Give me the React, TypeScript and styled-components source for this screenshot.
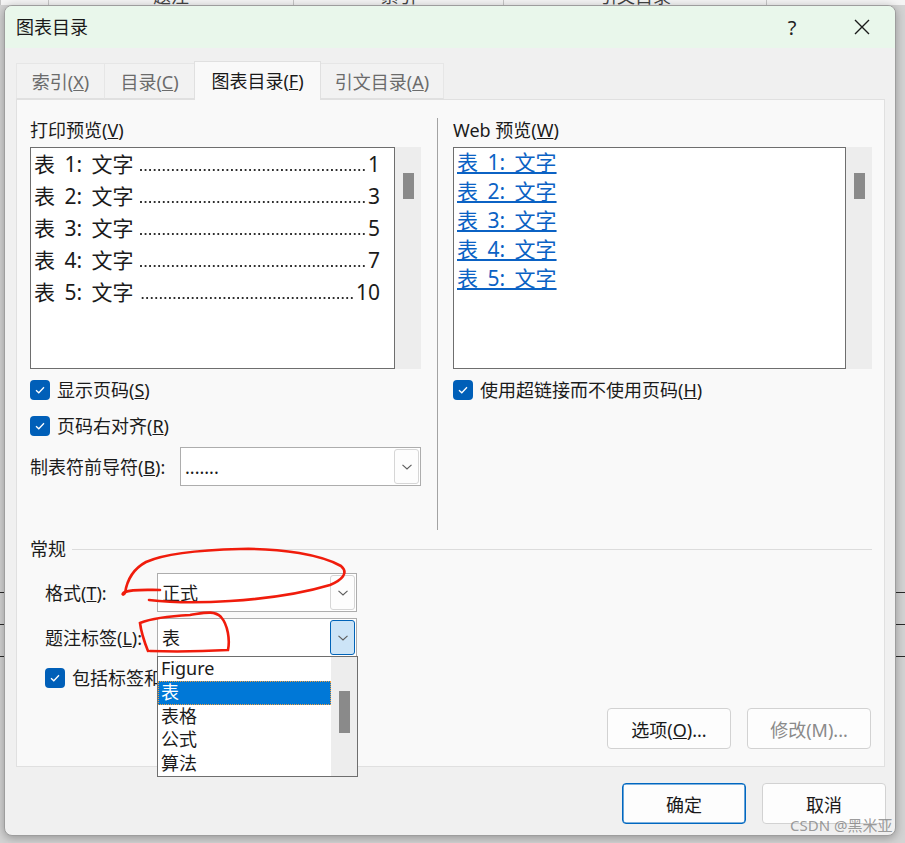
import React from 'react';
import styled, { createGlobalStyle } from 'styled-components';

const GlobalStyle = createGlobalStyle`
  html, body {
    margin: 0;
    padding: 0;
  }
  body {
    background: #cfcfcf;
    font-family: "Noto Sans", "Noto Sans CJK SC", sans-serif;
    color: #1b1b1b;
  }
  * {
    box-sizing: border-box;
  }
`;

const printRows = [
  { n: 1, page: '1' },
  { n: 2, page: '3' },
  { n: 3, page: '5' },
  { n: 4, page: '7' },
  { n: 5, page: '10' },
];

const captionOptions = ['Figure', '表', '表格', '公式', '算法'];

const Page = styled.div`
  position: relative;
  width: 905px;
  height: 843px;
  overflow: hidden;
`;

/* the Word document lying behind the dialog */
const BackDoc = styled.div`
  width: 905px;
  height: 843px;
  display: flex;
  flex-direction: column;
  background: #d3d3d3;
`;

const DocHeader = styled.div`
  height: 5px;
  display: grid;
  grid-template-columns: 48px 245px 210px 263px 1fr;
  background: #f4f4f4;
  overflow: hidden;
`;

const DocCell = styled.div`
  display: flex;
  justify-content: center;
  border-left: 1px solid #c6c6c6;
  font-size: 18px;
  line-height: 18px;
  color: #444;
  margin-top: -13px;
  padding-top: 13px;
`;

const DocCellText = styled.span`
  margin-top: -13px;
`;

const DocRows = styled.div`
  margin-top: 587px;
  display: flex;
  flex-direction: column;
`;

const DocRow = styled.div`
  height: 32px;
  border-top: 1px solid #2a2a2a;
`;

const Dialog = styled.div`
  position: absolute;
  top: 5px;
  left: 4px;
  width: 892px;
  height: 831px;
  display: flex;
  flex-direction: column;
  background: #f0f0f0;
  border: 1px solid #9d9d9d;
  border-radius: 8px;
  overflow: hidden;
  box-shadow: 0 2px 10px rgba(0, 0, 0, 0.3);
`;

const TitleBar = styled.div`
  height: 42px;
  flex-shrink: 0;
  display: flex;
  align-items: center;
  padding-left: 11px;
  background: #e9f7eb;
`;

const Title = styled.span`
  font-size: 18px;
  line-height: 24px;
  color: #1a1a1a;
`;

const HelpButton = styled.div`
  margin-left: auto;
  margin-right: 14px;
  width: 46px;
  height: 42px;
  display: flex;
  align-items: center;
  justify-content: center;
  font-size: 20px;
  color: #222;
`;

const CloseButton = styled.div`
  width: 66px;
  height: 42px;
  display: flex;
  align-items: center;
  justify-content: center;
`;

const Body = styled.div`
  display: flex;
  flex-direction: column;
  padding: 13px 10px 0 11px;
`;

const TabRow = styled.div`
  height: 38px;
  display: flex;
  align-items: flex-end;
`;

const Tab = styled.div<{ $active?: boolean; $w: number }>`
  width: ${(p) => p.$w}px;
  height: ${(p) => (p.$active ? 39 : 36)}px;
  margin-bottom: ${(p) => (p.$active ? -1 : 0)}px;
  margin-left: -1px;
  position: relative;
  z-index: ${(p) => (p.$active ? 2 : 1)};
  display: flex;
  align-items: center;
  justify-content: center;
  font-size: 18px;
  color: ${(p) => (p.$active ? '#1a1a1a' : '#6b6b6b')};
  background: ${(p) => (p.$active ? '#f9f9f9' : '#f2f2f2')};
  border: 1px solid ${(p) => (p.$active ? '#e0e0e0' : '#e6e6e6')};
  border-bottom: ${(p) => (p.$active ? 'none' : '1px solid #e0e0e0')};
  padding-bottom: ${(p) => (p.$active ? 2 : 0)}px;

  &:first-child {
    margin-left: 0;
  }
`;

const Panel = styled.div`
  height: 668px;
  display: flex;
  flex-direction: column;
  background: #f9f9f9;
  border: 1px solid #e0e0e0;
  padding: 18px 12px 17px 13px;
`;

const TopSection = styled.div`
  height: 412px;
  display: flex;
`;

const Column = styled.div<{ $w: number }>`
  width: ${(p) => p.$w}px;
  display: flex;
  flex-direction: column;
`;

const VDivider = styled.div`
  width: 1px;
  background: #a3a3a3;
  margin: 0 15px 0 16px;
`;

const Heading = styled.div`
  font-size: 18px;
  line-height: 24px;
  height: 24px;
`;

const PreviewFrame = styled.div`
  height: 222px;
  margin-top: 5px;
  display: flex;
`;

const PreviewList = styled.div`
  flex: 1;
  min-width: 0;
  background: #fff;
  border: 1px solid #6e6e6e;
  display: flex;
  flex-direction: column;
`;

const ScrollTrack = styled.div<{ $top: number }>`
  width: 26px;
  background: #ededed;
  padding: ${(p) => p.$top}px 7px 0 8px;
`;

const ScrollThumb = styled.div<{ $h: number }>`
  height: ${(p) => p.$h}px;
  background: #8a8a8a;
`;

const PrintRow = styled.div`
  height: 32px;
  display: flex;
  align-items: center;
  font-size: 21px;
  line-height: 32px;
  padding: 0 14px 0 3px;
  white-space: nowrap;
`;

const EntryLabel = styled.span`
  word-spacing: 4px;
  flex-shrink: 0;
`;

/* dot leader drawn as a repeating pattern, anchored to the page number */
const Leader = styled.span`
  flex: 1;
  min-width: 0;
  align-self: flex-end;
  height: 2px;
  margin: 0 1px 9px 6px;
  background-image: linear-gradient(to right, #2e2e2e 0 1.7px, transparent 1.7px 4.55px);
  background-size: 4.55px 2px;
  background-repeat: repeat-x;
  background-position: right bottom;
`;

const WebRow = styled.div`
  height: 29px;
  display: flex;
  align-items: center;
  font-size: 21px;
  line-height: 29px;
  padding-left: 3px;
  white-space: nowrap;
`;

const LinkText = styled.span`
  color: #0b62c4;
  text-decoration: underline;
  text-decoration-thickness: 1.5px;
  text-underline-offset: 2px;
  word-spacing: 4px;
`;

const CheckRow = styled.div<{ $mt: number; $indent?: number }>`
  height: 24px;
  margin-top: ${(p) => p.$mt}px;
  padding-left: ${(p) => p.$indent ?? 0}px;
  display: flex;
  align-items: center;
  gap: 7px;
  font-size: 18px;
  line-height: 24px;
  white-space: nowrap;
`;

const CheckLabel = styled.span`
  white-space: nowrap;
`;

const CheckBox = styled.span`
  width: 20px;
  height: 20px;
  flex-shrink: 0;
  border-radius: 4px;
  background: #005fb8;
  display: flex;
  align-items: center;
  justify-content: center;
`;

const FieldRow = styled.div`
  margin-top: 9px;
  height: 39px;
  display: flex;
  align-items: center;
`;

const FieldLabel = styled.span<{ $w: number }>`
  width: ${(p) => p.$w}px;
  flex-shrink: 0;
  font-size: 18px;
  line-height: 24px;
  white-space: nowrap;
`;

const Combo = styled.div<{ $w: number }>`
  position: relative;
  width: ${(p) => p.$w}px;
  height: 39px;
  display: flex;
  align-items: center;
  background: #fff;
  border: 1px solid #adadad;
  padding-left: 4px;
`;

const ComboText = styled.span`
  flex: 1;
  font-size: 18px;
  line-height: 24px;
`;

const ComboButton = styled.div<{ $open?: boolean }>`
  width: 25px;
  height: 35px;
  margin-right: 1px;
  display: flex;
  align-items: center;
  justify-content: center;
  border-radius: 3px;
  border: 1px solid ${(p) => (p.$open ? '#0063b8' : '#d6d6d6')};
  background: ${(p) => (p.$open ? '#cce4f7' : '#fdfdfd')};
`;

const GroupHeader = styled.div`
  margin-top: 7px;
  height: 24px;
  display: flex;
  align-items: center;
  font-size: 18px;
  line-height: 24px;
`;

const GroupLine = styled.div`
  flex: 1;
  height: 1px;
  margin-left: 6px;
  background: #dcdcdc;
`;

const FormGrid = styled.div`
  margin-top: 12px;
  padding-left: 15px;
  display: grid;
  grid-template-columns: 112px 200px;
  row-gap: 6px;
  align-items: center;
`;

const Dropdown = styled.div`
  position: absolute;
  top: 37px;
  left: -1px;
  width: 201px;
  height: 121px;
  display: flex;
  background: #fff;
  border: 1px solid #6e6e6e;
  z-index: 5;
`;

const DropList = styled.div`
  flex: 1;
  display: flex;
  flex-direction: column;
`;

const DropItem = styled.div<{ $selected?: boolean }>`
  height: 24px;
  padding-left: 3px;
  font-size: 18px;
  line-height: 23px;
  color: ${(p) => (p.$selected ? '#fff' : '#1b1b1b')};
  background: ${(p) => (p.$selected ? '#0078d7' : 'transparent')};
  outline: ${(p) => (p.$selected ? '1px dotted #f0a040' : 'none')};
  outline-offset: -1px;
`;

const ButtonRow = styled.div`
  margin-top: auto;
  padding-right: 1px;
  display: flex;
  justify-content: flex-end;
  gap: 16px;
`;

const Button = styled.div<{ $primary?: boolean; $disabled?: boolean }>`
  width: 124px;
  height: 41px;
  display: flex;
  align-items: center;
  justify-content: center;
  font-size: 18px;
  color: ${(p) => (p.$disabled ? '#8a8a8a' : '#1a1a1a')};
  background: #fdfdfd;
  border-radius: 4px;
  border: 1px solid ${(p) => (p.$primary ? '#0067c0' : '#d2d2d2')};
  box-shadow: ${(p) => (p.$primary ? 'inset 0 0 0 0.6px #0067c0' : 'none')};
`;

const ButtonText = styled.span`
  white-space: nowrap;
`;

const Footer = styled.div`
  padding: 16px 9px 11px 0;
  display: flex;
  justify-content: flex-end;
  gap: 16px;
`;

const Watermark = styled.div`
  position: absolute;
  left: 790px;
  top: 815px;
  font-size: 15px;
  line-height: 20px;
  color: rgba(130, 130, 130, 0.8);
  font-family: "Noto Sans", "Noto Sans CJK SC", sans-serif;
  white-space: nowrap;
  z-index: 10;
`;

const Annotations = styled.svg`
  position: absolute;
  left: 0;
  top: 0;
  pointer-events: none;
  z-index: 20;
`;

const Check = () => (
  <svg width="12" height="10" viewBox="0 0 12 10">
    <path d="M2 5.2 L4.8 7.8 L10 2.2" fill="none" stroke="#fff" strokeWidth="1.3" />
  </svg>
);

const Chevron = () => (
  <svg width="12" height="8" viewBox="0 0 12 8">
    <path d="M1.5 1.8 L6 6 L10.5 1.8" fill="none" stroke="#5c5c5c" strokeWidth="1.1" />
  </svg>
);

const CloseIcon = () => (
  <svg width="16" height="16" viewBox="0 0 16 16">
    <path d="M1 1 L15 15 M15 1 L1 15" stroke="#1a1a1a" strokeWidth="1.4" />
  </svg>
);

const Key: React.FC<{ k: string }> = ({ k }) => (
  <>
    (<u>{k}</u>)
  </>
);

const App: React.FC = () => {
  return (
    <Page>
      <GlobalStyle />
      <BackDoc>
        <DocHeader>
          <DocCell />
          <DocCell>
            <DocCellText>题注</DocCellText>
          </DocCell>
          <DocCell>
            <DocCellText>索引</DocCellText>
          </DocCell>
          <DocCell>
            <DocCellText>引文目录</DocCellText>
          </DocCell>
          <DocCell />
        </DocHeader>
        <DocRows>
          <DocRow />
          <DocRow />
          <DocRow />
        </DocRows>
      </BackDoc>

      <Dialog>
        <TitleBar>
          <Title>图表目录</Title>
          <HelpButton>?</HelpButton>
          <CloseButton>
            <CloseIcon />
          </CloseButton>
        </TitleBar>

        <Body>
          <TabRow>
            <Tab $w={89}>
              <span>
                索引<Key k="X" />
              </span>
            </Tab>
            <Tab $w={91}>
              <span>
                目录<Key k="C" />
              </span>
            </Tab>
            <Tab $w={127} $active>
              <span>
                图表目录<Key k="F" />
              </span>
            </Tab>
            <Tab $w={124}>
              <span>
                引文目录<Key k="A" />
              </span>
            </Tab>
          </TabRow>

          <Panel>
            <TopSection>
              <Column $w={391}>
                <Heading>
                  打印预览<Key k="V" />
                </Heading>
                <PreviewFrame>
                  <PreviewList>
                    {printRows.map((r) => (
                      <PrintRow key={r.n}>
                        <EntryLabel>{`表 ${r.n}: 文字`}</EntryLabel>
                        <Leader />
                        <span>{r.page}</span>
                      </PrintRow>
                    ))}
                  </PreviewList>
                  <ScrollTrack $top={26}>
                    <ScrollThumb $h={26} />
                  </ScrollTrack>
                </PreviewFrame>
                <CheckRow $mt={9}>
                  <CheckBox>
                    <Check />
                  </CheckBox>
                  <CheckLabel>
                    显示页码<Key k="S" />
                  </CheckLabel>
                </CheckRow>
                <CheckRow $mt={12}>
                  <CheckBox>
                    <Check />
                  </CheckBox>
                  <CheckLabel>
                    页码右对齐<Key k="R" />
                  </CheckLabel>
                </CheckRow>
                <FieldRow>
                  <FieldLabel $w={150}>
                    制表符前导符<Key k="B" />:
                  </FieldLabel>
                  <Combo $w={241}>
                    <ComboText>.......</ComboText>
                    <ComboButton>
                      <Chevron />
                    </ComboButton>
                  </Combo>
                </FieldRow>
              </Column>

              <VDivider />

              <Column $w={419}>
                <Heading>
                  Web 预览<Key k="W" />
                </Heading>
                <PreviewFrame>
                  <PreviewList>
                    {printRows.map((r) => (
                      <WebRow key={r.n}>
                        <LinkText>{`表 ${r.n}: 文字`}</LinkText>
                      </WebRow>
                    ))}
                  </PreviewList>
                  <ScrollTrack $top={26}>
                    <ScrollThumb $h={26} />
                  </ScrollTrack>
                </PreviewFrame>
                <CheckRow $mt={9}>
                  <CheckBox>
                    <Check />
                  </CheckBox>
                  <CheckLabel>
                    使用超链接而不使用页码<Key k="H" />
                  </CheckLabel>
                </CheckRow>
              </Column>
            </TopSection>

            <GroupHeader>
              常规
              <GroupLine />
            </GroupHeader>

            <FormGrid>
              <FieldLabel $w={112}>
                格式<Key k="T" />:
              </FieldLabel>
              <Combo $w={200}>
                <ComboText>正式</ComboText>
                <ComboButton>
                  <Chevron />
                </ComboButton>
              </Combo>
              <FieldLabel $w={112}>
                题注标签<Key k="L" />:
              </FieldLabel>
              <Combo $w={200}>
                <ComboText>表</ComboText>
                <ComboButton $open>
                  <Chevron />
                </ComboButton>
                <Dropdown>
                  <DropList>
                    {captionOptions.map((o) => (
                      <DropItem key={o} $selected={o === '表'}>
                        {o}
                      </DropItem>
                    ))}
                  </DropList>
                  <ScrollTrack $top={34}>
                    <ScrollThumb $h={42} />
                  </ScrollTrack>
                </Dropdown>
              </Combo>
            </FormGrid>

            <CheckRow $mt={9} $indent={15}>
              <CheckBox>
                <Check />
              </CheckBox>
              <CheckLabel>
                包括标签和编号<Key k="N" />
              </CheckLabel>
            </CheckRow>

            <ButtonRow>
              <Button>
                <ButtonText>
                  选项<Key k="O" />...
                </ButtonText>
              </Button>
              <Button $disabled>
                <ButtonText>修改(M)...</ButtonText>
              </Button>
            </ButtonRow>
          </Panel>
        </Body>

        <Footer>
          <Button $primary>确定</Button>
          <Button>取消</Button>
        </Footer>
      </Dialog>

      <Annotations width="905" height="843" viewBox="0 0 905 843">
        <path
          d="M160 590 C 148 590, 132 589, 125 592 C 121 594, 123 596, 125 593 C 127 580, 133 569, 146 562 C 166 553, 200 550, 240 549 C 282 548, 322 555, 341 566 C 349 573, 342 580, 330 585 C 300 594, 262 599, 230 601 C 200 603, 175 603, 149 600"
          fill="none"
          stroke="#f01c0c"
          strokeWidth="2.6"
          strokeLinecap="round"
        />
        <path
          d="M148 651 C 144 641, 141 631, 140 623 C 150 619, 170 616, 190 615 C 204 613, 214 610, 221 617 C 228 625, 230 640, 228 650 C 210 651, 180 652, 150 651"
          fill="none"
          stroke="#f01c0c"
          strokeWidth="2.6"
          strokeLinecap="round"
        />
      </Annotations>

      <Watermark>CSDN @黑米亚</Watermark>
    </Page>
  );
};

export default App;
